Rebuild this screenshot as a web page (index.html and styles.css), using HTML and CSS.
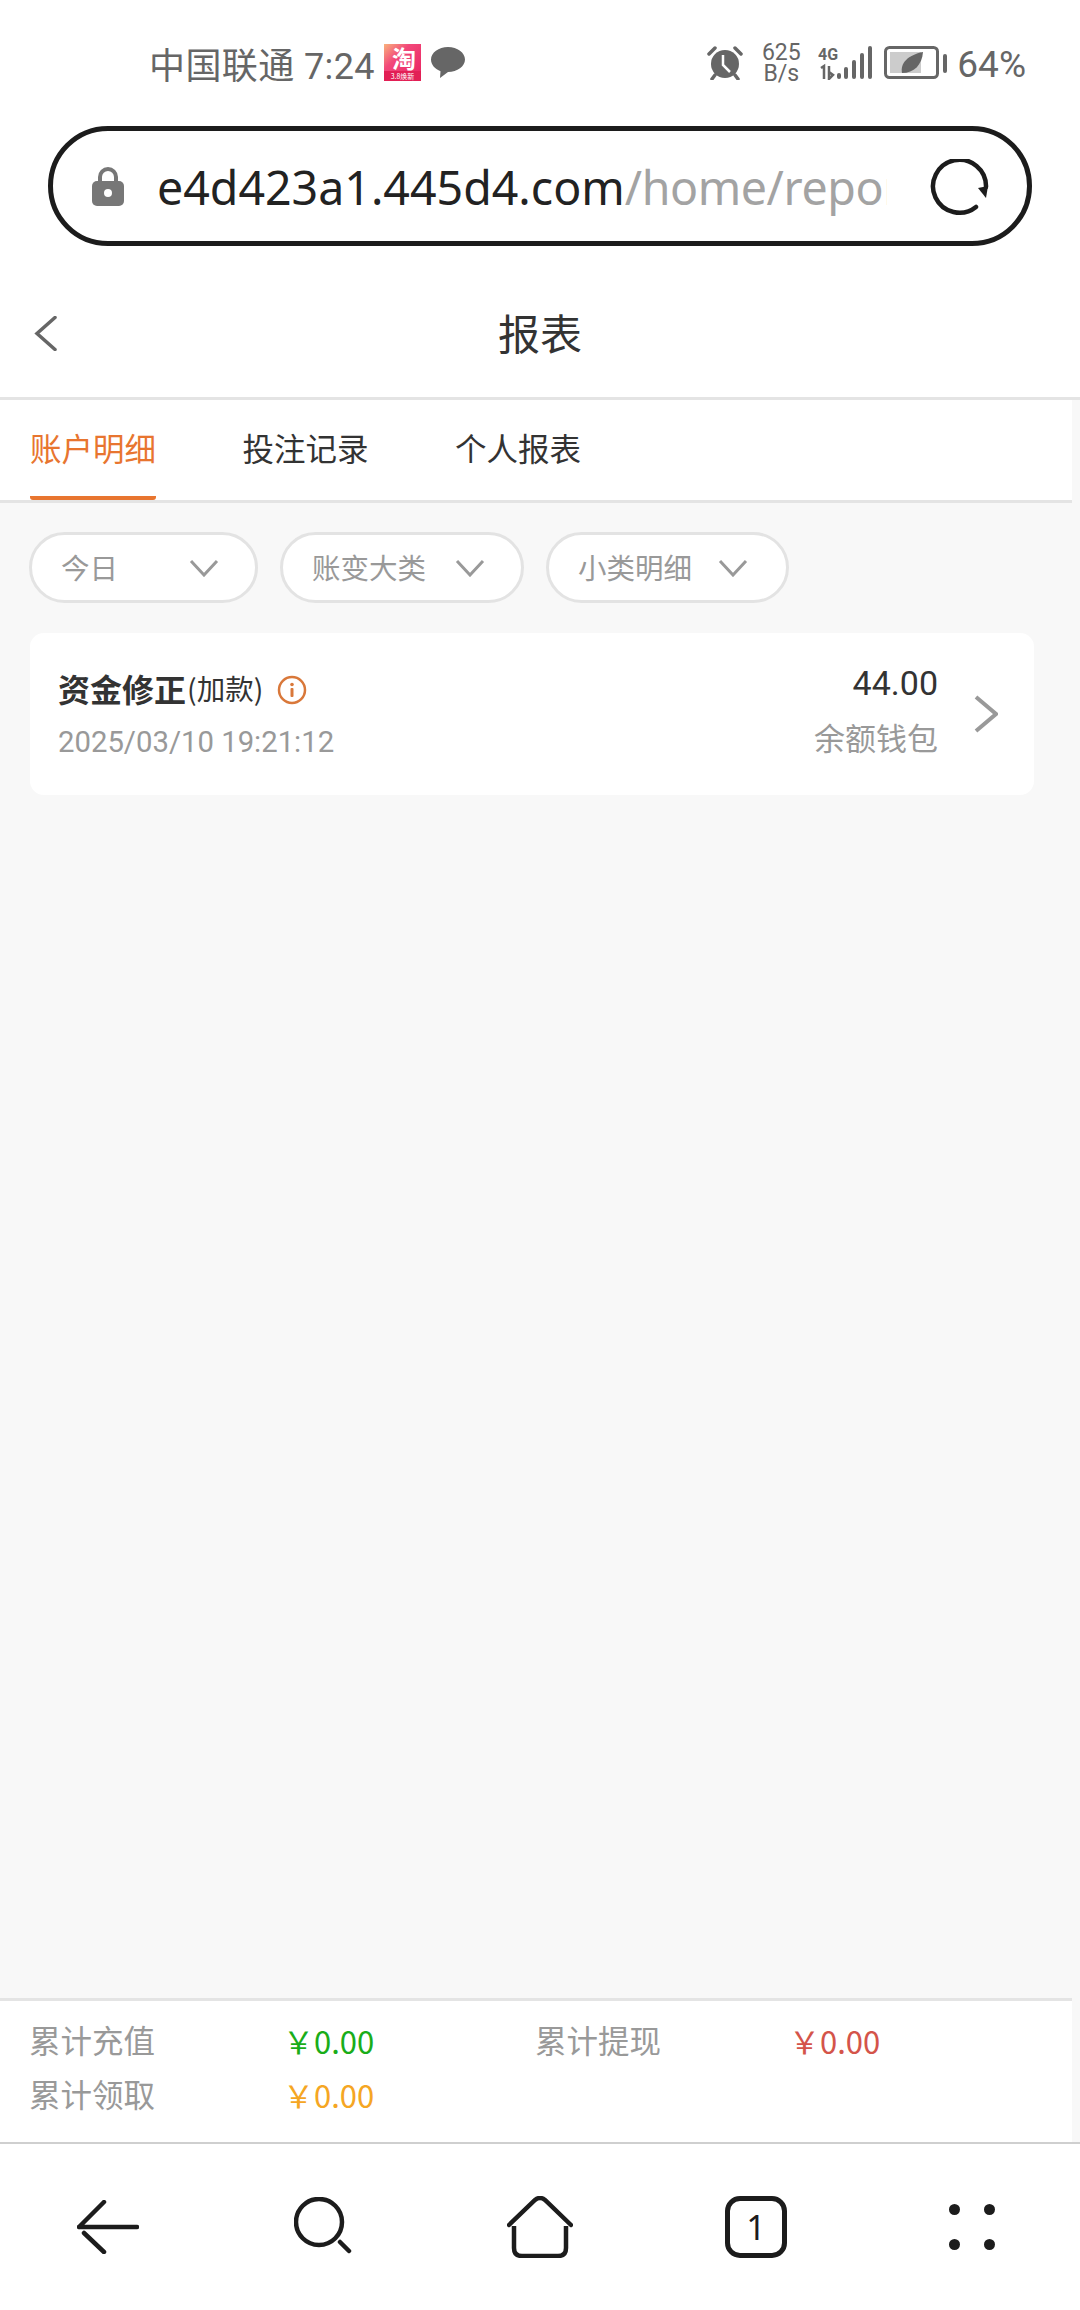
FILE: index.html
```html
<!DOCTYPE html>
<html lang="zh">
<head>
<meta charset="utf-8">
<title>报表</title>
<link rel="stylesheet" href="styles.css">
</head>
<body>
<div class="phone">
  <header class="status">
    <div class="status-left">
      <span class="carrier">中国联通 7:24</span>
      <svg class="taobao" width="37" height="37" viewBox="0 0 37 37">
        <defs><linearGradient id="tb" x1="0" y1="0" x2="1" y2="1"><stop offset="0" stop-color="#f9b27c"/><stop offset=".35" stop-color="#f2487a"/><stop offset="1" stop-color="#e8215f"/></linearGradient></defs>
        <rect width="37" height="37" fill="url(#tb)"/>
        <rect x="0" y="27" width="37" height="10" fill="#e21f55"/>
        <text x="20" y="24" class="taobao-char">淘</text>
        <text x="18.500" y="35" class="taobao-sub">3.8焕新</text>
      </svg>
      <svg width="34" height="31" viewBox="0 0 34 31"><path d="M17 0C7.600 0 0 5.600 0 12.600 0 18 4.300 22.400 9.500 24.200L9 31l8-6C26.400 25 34 19.500 34 12.600 34 5.600 26.400 0 17 0Z" fill="#666"/></svg>
    </div>
    <div class="status-right">
      <svg class="alarm" width="36" height="34" viewBox="0 0 36 34">
        <circle cx="18" cy="18" r="14" fill="#666"/>
        <path d="M2 8 8 2M34 8 28 2M8 29 5 33M28 29 31 33" stroke="#666" stroke-width="3.500" stroke-linecap="round" fill="none"/>
        <path d="M16 9v10l7 7" stroke="#fff" stroke-width="2.500" fill="none"/>
      </svg>
      <div class="speed"><span>625</span><span>B/s</span></div>
      <svg class="signal" width="54" height="34" viewBox="0 0 54 34">
        <text x="0" y="14" class="net">4G</text>
        <path d="M3 22l3-2v13M11 20v13l4-4-4-3" stroke="#666" stroke-width="2.500" fill="none"/>
        <rect x="19" y="27" width="4" height="6" rx="2" fill="#666"/>
        <rect x="26" y="21" width="4" height="12" rx="2" fill="#666"/>
        <rect x="34" y="14" width="4" height="19" rx="2" fill="#666"/>
        <rect x="42" y="7" width="4" height="26" rx="2" fill="#666"/>
        <rect x="50" y="0" width="4" height="33" rx="2" fill="#666"/>
      </svg>
      <svg class="battery" width="63" height="33" viewBox="0 0 63 33">
        <rect x="1.500" y="1.500" width="52" height="30" rx="4" fill="none" stroke="#666" stroke-width="3"/>
        <rect x="6" y="6" width="31" height="21" fill="#ccc"/>
        <rect x="59" y="8" width="4" height="19" rx="2" fill="#666"/>
        <path d="M18 27C16 17 24 9 39 6 38 19 30 27 18 27Z" fill="#666"/>
      </svg>
      <span class="percent">64%</span>
    </div>
  </header>

  <div class="urlbar">
    <svg class="lock" width="32" height="39" viewBox="0 0 32 39">
      <path d="M8 16V10a8 8 0 0 1 16 0v6" fill="none" stroke="#777" stroke-width="4"/>
      <rect y="14" width="32" height="25" rx="5" fill="#777"/>
      <circle cx="16" cy="26" r="4" fill="#fff"/>
    </svg>
    <div class="url"><span class="host">e4d423a1.445d4.com</span><span class="path">/home/report</span></div>
    <svg class="reload" width="60" height="60" viewBox="0 0 60 60">
      <path d="M46 48A26.500 26.500 0 1 1 56 28" fill="none" stroke="#1c1c1c" stroke-width="4.500" stroke-linecap="round"/>
      <path d="M48 29 58 27 56 39Z" fill="#1c1c1c"/>
    </svg>
  </div>

  <div class="titlebar">
    <svg class="back" width="23" height="35" viewBox="0 0 23 35"><path d="M21 1.500 3 17.500 21 33.500" fill="none" stroke="#666" stroke-width="3.500" stroke-linecap="round"/></svg>
    <h1 class="title">报表</h1>
  </div>

  <main class="main">
    <div class="content">
      <nav class="tabs">
        <a class="tab tab-active">账户明细</a>
        <a class="tab">投注记录</a>
        <a class="tab">个人报表</a>
      </nav>
      <div class="filters">
        <div class="filter filter-day"><span>今日</span><svg width="30" height="18" viewBox="0 0 30 18"><path d="M2 2 15 16 28 2" fill="none" stroke="#999" stroke-width="3"/></svg></div>
        <div class="filter filter-type"><span>账变大类</span><svg width="30" height="18" viewBox="0 0 30 18"><path d="M2 2 15 16 28 2" fill="none" stroke="#999" stroke-width="3"/></svg></div>
        <div class="filter filter-sub"><span>小类明细</span><svg width="30" height="18" viewBox="0 0 30 18"><path d="M2 2 15 16 28 2" fill="none" stroke="#999" stroke-width="3"/></svg></div>
      </div>
      <section class="card">
        <div class="card-left">
          <div class="card-title"><b>资金修正</b><span class="sub">(加款)</span>
            <svg class="info" width="30" height="30" viewBox="0 0 30 30"><circle cx="15" cy="15" r="13" fill="none" stroke="#d9783a" stroke-width="2.500"/><rect x="13.500" y="13" width="3" height="9" rx="1" fill="#d9783a"/><circle cx="15" cy="9.500" r="1.800" fill="#d9783a"/></svg>
          </div>
          <div class="date">2025/03/10 19:21:12</div>
        </div>
        <div class="card-right">
          <div class="amount">44.00</div>
          <div class="wallet">余额钱包</div>
        </div>
        <svg class="go" width="24" height="38" viewBox="0 0 24 38"><path d="M2 2 22 19 2 36" fill="none" stroke="#999" stroke-width="4"/></svg>
      </section>
      <footer class="totals">
        <div class="total"><span class="label">累计充值</span><span class="value green">￥0.00</span></div>
        <div class="total"><span class="label">累计提现</span><span class="value red">￥0.00</span></div>
        <div class="total"><span class="label">累计领取</span><span class="value orange">￥0.00</span></div>
      </footer>
    </div>
  </main>

  <div class="browserbar">
    <svg class="bb-back" width="62" height="54" viewBox="0 0 62 54"><path d="M2 27H60M27 2 2 27M7 33 27 52" fill="none" stroke="#1c1c1c" stroke-width="4.500" stroke-linecap="round"/></svg>
    <svg class="bb-search" width="58" height="60" viewBox="0 0 58 60"><circle cx="25" cy="25" r="23" fill="none" stroke="#1c1c1c" stroke-width="4.500"/><path d="M46 45 55 54" stroke="#1c1c1c" stroke-width="4.500" stroke-linecap="round"/></svg>
    <svg class="bb-home" width="66" height="62" viewBox="0 0 66 62"><path d="M2 29 28 4Q33 0 38 4L64 29" fill="none" stroke="#1c1c1c" stroke-width="4.500" stroke-linecap="round"/><path d="M7 30V52Q7 60 15 60H51Q59 60 59 52V30" fill="none" stroke="#1c1c1c" stroke-width="4.500"/></svg>
    <div class="tabcount">1</div>
    <svg class="bb-more" width="46" height="46" viewBox="0 0 46 46"><circle cx="5.500" cy="5.500" r="5.500" fill="#1c1c1c"/><circle cx="40.500" cy="5.500" r="5.500" fill="#1c1c1c"/><circle cx="5.500" cy="40.500" r="5.500" fill="#1c1c1c"/><circle cx="40.500" cy="40.500" r="5.500" fill="#1c1c1c"/></svg>
  </div>
</div>
</body>
</html>
```
FILE: styles.css
```css
* { box-sizing: border-box; }
html, body { margin: 0; padding: 0; background: #fff; }
body { font-family: "Noto Sans CJK SC", "Noto Sans", sans-serif; }

.phone { width: 1080px; height: 2310px; display: flex; flex-direction: column; overflow: hidden; }

.status { height: 126px; flex: none; display: flex; justify-content: space-between; align-items: flex-start; padding: 44px 54px 0 149px; color: #666; }
.status-left, .status-right { display: flex; align-items: center; height: 37px; }
.carrier { font-family: Roboto, "Noto Sans CJK SC", sans-serif; font-size: 36px; white-space: nowrap; letter-spacing: .4px; margin-right: 9px; }
.taobao { margin-right: 10px; }
.taobao-char { font-family: "Noto Sans CJK SC", sans-serif; font-size: 24px; fill: #fff; text-anchor: middle; font-weight: 700; }
.taobao-sub { font-family: "Noto Sans CJK SC", sans-serif; font-size: 7px; fill: #fff; text-anchor: middle; }
.alarm { margin-right: 19px; }
.speed { display: flex; flex-direction: column; align-items: center; font-family: Roboto, sans-serif; font-size: 23px; line-height: 21px; width: 38px; margin-right: 18px; }
.signal { margin-right: 12px; }
.net { font-family: Roboto, sans-serif; font-size: 16px; font-weight: 700; fill: #666; }
.battery { margin-right: 10px; }
.percent { font-family: Roboto, sans-serif; font-size: 37px; position: relative; top: 2px; }

.urlbar { height: 120px; flex: none; margin: 0 48px; border: 5px solid #1c1c1c; border-radius: 60px; display: flex; align-items: center; padding: 0 22px 0 39px; background: #fff; }
.lock { flex: none; margin-right: 33px; }
.url { width: 730px; overflow: hidden; white-space: nowrap; font-family: "Noto Sans", sans-serif; font-size: 46.500px; line-height: 62px; flex: none; position: relative; top: 1px; }
.host { color: #222; }
.path { color: #a3a3a3; letter-spacing: -.4px; }
.reload { flex: none; margin-left: 43px; position: relative; top: 3px; }

.titlebar { height: 151px; flex: none; display: flex; align-items: center; justify-content: center; position: relative; background: #fff; }
.title { margin: 0; font-size: 42px; font-weight: 400; color: #333; line-height: 60px; position: relative; top: 10px; }
.back { position: absolute; left: 34px; top: 70px; }

.main { flex: none; height: 1745px; background: #f8f8f8; border-top: 3px solid #e4e4e4; }
.content { width: 1072px; height: 100%; display: flex; flex-direction: column; }

.tabs { height: 103px; flex: none; background: #fff; border-bottom: 3px solid #e4e4e4; display: flex; gap: 86.500px; padding-left: 30px; }
.tab { font-size: 31.500px; color: #333; line-height: 94px; height: 100px; width: 126px; white-space: nowrap; }
.tab-active { color: #e8752f; border-bottom: 4px solid #e8752f; border-radius: 0 0 3px 3px; }

.filters { display: flex; gap: 22px; padding: 29px 0 0 29px; flex: none; }
.filter { height: 71px; border: 3px solid #e3e3e3; border-radius: 36px; background: #fff; display: flex; align-items: center; justify-content: space-between; color: #999; font-size: 28.500px; line-height: 62px; }
.filter span { position: relative; top: -1px; }
.filter svg { flex: none; }
.filter-day { width: 229px; padding: 0 36px 0 29px; }
.filter-type { width: 244px; padding: 0 36px 0 29px; }
.filter-sub { width: 243px; padding: 0 38px 0 29px; }

.card { margin: 30px 0 0 30px; width: 1004px; height: 162px; flex: none; background: #fff; border-radius: 14px; display: flex; align-items: center; padding: 0 35px 0 28px; }
.card-left { flex: 1; }
.card-title { display: flex; align-items: center; height: 40px; color: #333; position: relative; top: 1px; }
.card-title b { font-size: 32px; font-weight: 700; }
.sub { font-size: 28.500px; margin-left: 1px; }
.info { margin-left: 14px; position: relative; top: 2px; }
.date { font-family: Roboto, sans-serif; font-size: 29.300px; color: #999; margin-top: 15px; line-height: 40px; }
.card-right { text-align: right; margin-right: 36px; }
.amount { font-family: Roboto, sans-serif; font-size: 34px; color: #333; line-height: 40px; position: relative; top: -6px; }
.wallet { font-size: 31px; color: #999; line-height: 44px; margin-top: 6px; }
.go { flex: none; margin-right: 1px; }

.totals { margin-top: auto; height: 144px; flex: none; background: #fff; border-top: 3px solid #e4e4e4; display: grid; grid-template-columns: 506px 1fr; grid-auto-rows: 54px; padding: 11px 0 0 29px; }
.total { display: flex; align-items: center; }
.label { width: 254px; font-size: 31.500px; color: #999; flex: none; }
.value { font-family: "Noto Sans CJK SC", sans-serif; font-size: 31px; white-space: nowrap; position: relative; top: 1px; }
.green { color: #1aad19; }
.red { color: #d4544a; }
.orange { color: #f5a623; }

.browserbar { flex: 1; background: #fff; border-top: 2px solid #cfcfcf; display: flex; align-items: center; padding: 0 0 0 77px; }
.bb-search { margin-left: 155px; }
.bb-home { margin-left: 155px; }
.tabcount { margin-left: 152px; width: 62px; height: 62px; border: 5px solid #1c1c1c; border-radius: 15px; display: flex; align-items: center; justify-content: center; font-family: "Noto Sans", sans-serif; font-size: 34px; color: #1c1c1c; }
.bb-more { margin-left: 162px; }
```
